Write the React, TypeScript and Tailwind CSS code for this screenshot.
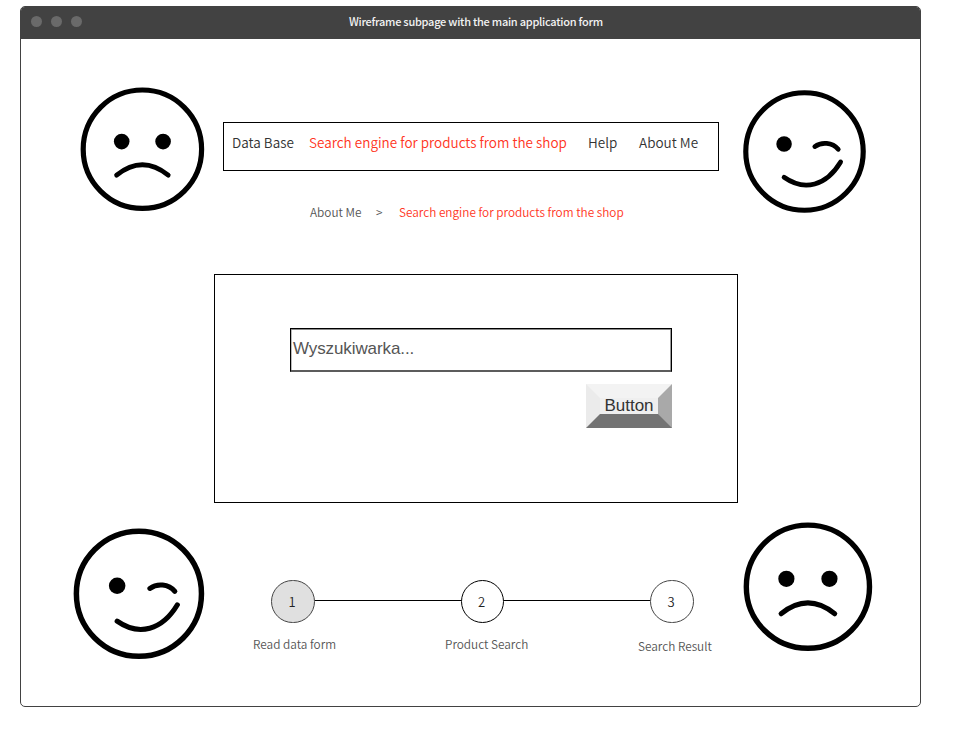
import type { ReactNode } from "react";

type FaceProps = { size: number; viewBox?: string; className: string };

function Face({ size, viewBox = "-62.4 -62.2 124 124", className, children }: FaceProps & { children: ReactNode }) {
  return (
    <svg
      width={size}
      height={size}
      viewBox={viewBox}
      className={`block shrink-0 overflow-visible ${className}`}
      fill="none"
      stroke="#000"
      strokeWidth="5.2"
      strokeLinecap="round"
    >
      <circle r="59.2" />
      {children}
    </svg>
  );
}

function SadFace(props: FaceProps) {
  return (
    <Face {...props}>
      <circle cx="-20.7" cy="-7.6" r="7.8" fill="#000" stroke="none" />
      <circle cx="20.7" cy="-7.6" r="7.8" fill="#000" stroke="none" />
      <path d="M-25.8 26Q0 5.2 25.8 26" strokeWidth="4.8" />
    </Face>
  );
}

function WinkFace(props: FaceProps) {
  return (
    <Face {...props}>
      <circle cx="-20.6" cy="-7.5" r="7.8" fill="#000" stroke="none" />
      <path d="M10.4-5C17-10 28-9.5 34-2.2" strokeWidth="4.8" />
      <path d="M-20.6 26C0 40.5 22 34.5 36.4 10.5" strokeWidth="4.8" />
    </Face>
  );
}

function Step({ n, className }: { n: number; className: string }) {
  return (
    <div className={`flex h-[43px] shrink-0 items-center justify-center rounded-full border pr-[2px] text-[13px] leading-none text-[#222] ${className}`}>
      {n}
    </div>
  );
}

export default function App() {
  return (
    <div className="h-[737px] w-[969px] overflow-hidden bg-white pt-[6px] pl-[20px] font-['Noto_Sans_CJK_SC',sans-serif] font-[350] whitespace-nowrap">
      <div className="flex h-[701px] w-[901px] flex-col overflow-hidden rounded-[5px] border border-[#424242] bg-white">
        <header className="flex h-8 shrink-0 items-center bg-[#424242]">
          <div className="flex w-[328px] gap-[10px] pb-[4px] pl-[10px]">
            <span className="size-[11px] rounded-full bg-[#6a6a6a]" />
            <span className="-ml-px size-[11px] rounded-full bg-[#6a6a6a]" />
            <span className="-ml-px size-[11px] rounded-full bg-[#6a6a6a]" />
          </div>
          <h1 className="pb-[4px] text-[11px] leading-[16px] font-medium tracking-[-0.26px] text-[#f2f2f2]">
            Wireframe subpage with the main application form
          </h1>
        </header>

        <div className="flex min-h-0 flex-1">
          <aside className="w-[193px] shrink-0">
            <SadFace size={124} className="mt-[48px] ml-[59px]" />
            <WinkFace size={131} className="mt-[317px] ml-[52px]" />
          </aside>

          <main className="flex w-[524px] shrink-0 flex-col">
            <nav className="mt-[83px] ml-[9px] flex h-[49px] w-[496px] border border-black pt-[9px] pl-[8px] text-[13.5px] leading-[20px] tracking-[0.02px] text-[#333]">
              <a className="w-[77px]">Data Base</a>
              <a className="w-[279px] text-[#ff3422]">Search engine for products from the shop</a>
              <a className="w-[51px]">Help</a>
              <a>About Me</a>
            </nav>

            <div className="mt-[31px] ml-[96px] flex h-[21px] pt-px text-[11.8px] leading-[18px] text-[#555]">
              <span className="w-[66px]">About Me</span>
              <span className="w-[23px]">&gt;</span>
              <span className="text-[#ff3422]">Search engine for products from the shop</span>
            </div>

            <section className="mt-[51px] flex h-[229px] flex-col border border-black pt-[53px] pl-[75px] font-['Liberation_Sans',sans-serif] font-normal">
              <div className="h-[44px] w-[382px] border border-black border-b-[#5c5c5c] pt-[9px] pl-[2px] text-[17px] leading-[22px] tracking-[-0.1px] text-[#555] shadow-[inset_0_1px_#8a8a8a,inset_0_-1px_#5c5c5c,inset_1px_0_#bbb,inset_-1px_0_#999]">
                Wyszukiwarka...
              </div>
              <button className="mt-[12px] ml-[296px] flex h-[44px] w-[86px] items-center justify-center border-[14px] border-t-[#f3f3f3] border-r-[#a9a9a9] border-b-[#737373] border-l-[#ebebeb] bg-[#efefef] text-[17px] leading-[16px] text-[#333]">
                Button
              </button>
            </section>

            <div className="mt-[77px] ml-[57px] flex h-[43px]">
              <Step n={1} className="w-[44px] border-[#444] bg-[#e0e0e0]" />
              <div className="mt-[20px] h-px w-[146px] bg-black" />
              <Step n={2} className="w-[43px] border-black" />
              <div className="mt-[20px] h-px w-[146px] bg-black" />
              <Step n={3} className="w-[44px] border-[#444]" />
            </div>
            <div className="mt-[12px] ml-[39px] flex text-[11.8px] leading-[18px] text-[#555]">
              <span className="w-[192px]">Read data form</span>
              <span className="w-[193px]">Product Search</span>
              <span className="pt-[2px]">Search Result</span>
            </div>
          </main>

          <aside className="w-[182px] shrink-0">
            <WinkFace size={123} viewBox="-62 -62 124 124" className="mt-[51px] ml-[5px]" />
            <SadFace size={129} className="mt-[309px] ml-[5px]" />
          </aside>
        </div>
      </div>
    </div>
  );
}
